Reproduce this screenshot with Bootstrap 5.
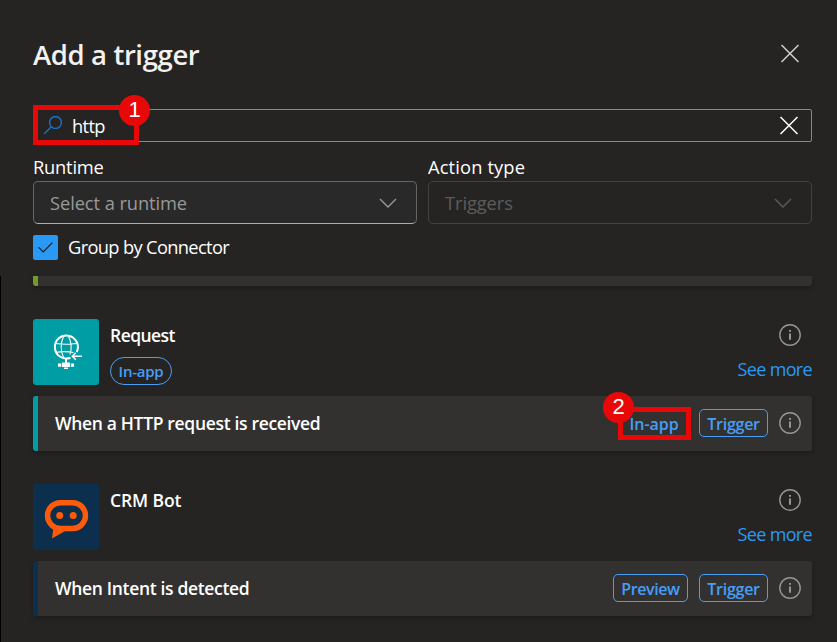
<!DOCTYPE html>
<html lang="en">
<head>
<meta charset="utf-8">
<meta name="viewport" content="width=device-width, initial-scale=1">
<title>Add a trigger</title>
<link rel="stylesheet" href="https://cdn.jsdelivr.net/npm/bootstrap@5.3.0/dist/css/bootstrap.min.css">
<style>
body{background:#252423;color:#fff;font-family:"Open Sans","Noto Sans",sans-serif;font-size:18.3px;line-height:24px;width:837px;height:642px;overflow:hidden}
svg{display:block;flex:none}
.panel{height:642px}
.panel-head{height:109px;padding:0 37px 0 33px;color:#f3f2f1}
.panel-title{font-size:27.5px;line-height:36px;font-weight:600;letter-spacing:-.38px;margin:37px 0 0}
.close-btn{margin-top:44px;color:#d2d0ce}
.filters{height:167px;padding:0 25px 0 33px}
.search{height:33px;border:1px solid #8a8886;border-radius:2px;padding:0 12px 0 9px}
.search-text{letter-spacing:-.65px;margin-left:10px}
.pickers{gap:11px;margin-top:12px}
.picker{flex:1 1 0}
.picker-label{line-height:26px;letter-spacing:.14px;margin-bottom:1px}
.picker-label.narrow{letter-spacing:-.2px}
.picker-box{height:43px;border:1px solid #666;border-bottom-color:#adadad;border-radius:5px;background:#292929;color:#999;padding:0 19px 0 16px;letter-spacing:-.08px}
.picker-box.off{background:transparent;border-color:#424242;color:#5c5c5c}
.group-check{margin-top:11px;gap:10px}
.check-sq{width:25px;height:25px;border-radius:2px;background:#2899f5}
.check-text{letter-spacing:-.66px;padding-bottom:1px}
.results{height:366px;padding:0 25px 0 32px;border-left:1px solid #000}
.strip{height:10px;background:#323130;border-left:5px solid #759b27;border-radius:0 0 3px 3px;box-shadow:0 2px 4px rgba(0,0,0,.25)}
.connector{margin-top:33px;height:66px}
.logo{width:66px;height:66px;border-radius:3px}
.c-request{background:#009da5}
.c-bot{background:#0b2f4c}
.connector-info{padding-left:11px}
.connector-name{font-weight:600;font-size:17.5px;line-height:24px;letter-spacing:-.55px;margin:4px 0 10px}
.connector-name.wide{letter-spacing:-.1px}
.semi{font-weight:600;color:#479ef5;font-size:16px;letter-spacing:-.4px}
.pill{height:28px;width:62px;border:1px solid #479ef5;border-radius:14px;font-size:15px;letter-spacing:-.25px}
.more{color:#2899f5;font-size:18px;letter-spacing:-.65px;text-decoration:none;line-height:24px;margin-top:11px}
.info-top{margin:5px 11px 0 0}
.operation{margin-top:11px;height:55px;background:#323130;border-left:5px solid;border-radius:3px;padding:0 11px 1px 17px;box-shadow:0 2px 5px rgba(0,0,0,.25)}
.b-request{border-left-color:#009da5}
.b-bot{border-left-color:#0b2f4c}
.operation-name{font-weight:600;font-size:17.5px;letter-spacing:-.33px;padding-bottom:1px}
.tag-box{height:28px;border:1px solid #479ef5;border-radius:5px;margin-right:11px;padding-top:2px}
.w-trigger{width:69px;letter-spacing:-.25px}
.w-preview{width:75px}
.w-inapp{width:68px;letter-spacing:-.05px}
.callout{position:absolute;border:5px solid #e90808}
.callout-num{position:absolute;width:31px;height:31px;border-radius:50%;background:#e90808;color:#fff;font:22px/30px "Liberation Sans",sans-serif;text-align:center}
.callout-1{left:33px;top:105px;width:106px;height:40px}
.num-1{left:119px;top:95px}
.callout-2{left:618px;top:407px;width:73px;height:33px}
.num-2{left:603px;top:392px}
</style>
</head>
<body>
<svg width="0" height="0" class="position-absolute">
<symbol id="info" viewBox="0 0 22 22"><circle cx="11" cy="11" r="10.2" fill="none" stroke="#979593" stroke-width="1.4"/><path d="M10 6h2v1.800h-2zM10 9.500h2v6.300h-2z" fill="#979593"/></symbol>
<symbol id="cross" viewBox="0 0 20 20"><path d="M1.500 1l17 17M18.500 1l-17 17" stroke="currentColor" stroke-width="1.500"/></symbol>
<symbol id="chevron" viewBox="0 0 18 10"><path d="M1 1l8 8 8-8" fill="none" stroke="currentColor" stroke-width="1.400"/></symbol>
</svg>
<main class="panel position-relative">
<header class="panel-head d-flex justify-content-between align-items-start">
<h1 class="panel-title">Add a trigger</h1>
<svg class="close-btn" width="20" height="20"><use href="#cross"/></svg>
</header>
<section class="filters">
<div class="search d-flex align-items-center">
<svg width="19" height="19" viewBox="0 0 19 19" fill="none" stroke="#1976d2" stroke-width="1.300"><circle cx="12.500" cy="6.500" r="5.900"/><path d="M8.300 10.700L1.100 17.900"/></svg>
<span class="search-text">http</span>
<svg class="ms-auto" width="20" height="20"><use href="#cross"/></svg>
</div>
<div class="pickers d-flex">
<div class="picker"><div class="picker-label narrow">Runtime</div>
<div class="picker-box d-flex align-items-center justify-content-between"><span>Select a runtime</span><svg width="18" height="10"><use href="#chevron"/></svg></div></div>
<div class="picker"><div class="picker-label">Action type</div>
<div class="picker-box off d-flex align-items-center justify-content-between"><span>Triggers</span><svg width="18" height="10"><use href="#chevron"/></svg></div></div>
</div>
<div class="group-check d-flex align-items-center">
<span class="check-sq d-flex align-items-center justify-content-center"><svg width="15" height="11" viewBox="0 0 15 11" fill="none" stroke="#1b1a19" stroke-width="1.200"><path d="M.6 5.400l4.600 4.500L14.400.6"/></svg></span>
<span class="check-text">Group by Connector</span>
</div>
</section>
<section class="results">
<div class="strip"></div>
<div class="connector d-flex">
<div class="logo c-request"><svg width="66" height="66" viewBox="0 0 66 66" fill="none" stroke="#fff"><path d="M37.500 38.700A11.500 11.500 0 1 1 43.700 33" stroke-width="2"/><path d="M22.500 24.500q10.500 1.500 21 0M22.500 33.500q9-1.800 18 0M30.500 17.500q-5 11 .5 22M35.500 17.500q4.500 8.500 1.500 18" stroke-width="1.100"/><path d="M49 37.300H39.500M42.800 33.800l-3.500 3.500 3.500 3.500" stroke-width="1.500"/><path d="M33 39.500v5" stroke-width="2"/><path d="M29 43.500h8v4.500h-8zM25 44.500h3.300v3.200h-3.300zM37.800 44.500h3.300v3.200h-3.300zM31 48.500h4v1.500h-4z" fill="#fff" stroke="none"/></svg></div>
<div class="flex-grow-1 connector-info"><div class="connector-name">Request</div><div class="pill semi d-flex align-items-center justify-content-center">In-app</div></div>
<div class="d-flex flex-column align-items-end"><svg class="info-top" width="22" height="22"><use href="#info"/></svg><a class="more" href="#">See more</a></div>
</div>
<div class="operation b-request d-flex align-items-center">
<span class="operation-name me-auto">When a HTTP request is received</span>
<span class="tag-box w-inapp semi d-flex align-items-center justify-content-center">In-app</span>
<span class="tag-box w-trigger semi d-flex align-items-center justify-content-center">Trigger</span>
<svg width="22" height="22"><use href="#info"/></svg>
</div>
<div class="connector d-flex">
<div class="logo c-bot"><svg width="66" height="66" viewBox="0 0 66 66"><path d="M20.500 43l-1.500 11.500L33 46.500z" fill="#ff5a0a"/><rect x="14.500" y="18.700" width="38" height="25.800" rx="12.900" fill="none" stroke="#ff5a0a" stroke-width="5.400"/><circle cx="26.700" cy="31.500" r="3.500" fill="#ff5a0a"/><circle cx="40.200" cy="31.500" r="3.500" fill="#ff5a0a"/></svg></div>
<div class="flex-grow-1 connector-info"><div class="connector-name wide">CRM Bot</div></div>
<div class="d-flex flex-column align-items-end"><svg class="info-top" width="22" height="22"><use href="#info"/></svg><a class="more" href="#">See more</a></div>
</div>
<div class="operation b-bot d-flex align-items-center">
<span class="operation-name me-auto">When Intent is detected</span>
<span class="tag-box w-preview semi d-flex align-items-center justify-content-center">Preview</span>
<span class="tag-box w-trigger semi d-flex align-items-center justify-content-center">Trigger</span>
<svg width="22" height="22"><use href="#info"/></svg>
</div>
</section>
<div class="callout callout-1"></div><div class="callout-num num-1">1</div>
<div class="callout callout-2"></div><div class="callout-num num-2">2</div>
</main>
<script src="https://cdn.jsdelivr.net/npm/bootstrap@5.3.0/dist/js/bootstrap.bundle.min.js"></script>
</body>
</html>
